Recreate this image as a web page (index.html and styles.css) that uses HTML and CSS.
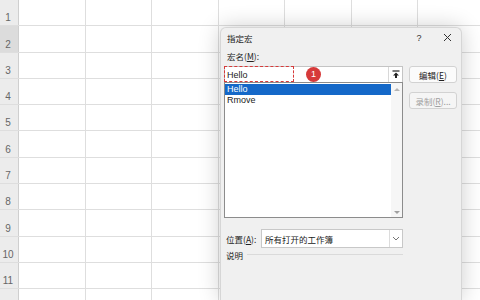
FILE: index.html
```html
<!DOCTYPE html>
<html lang="zh-CN">
<head>
    <meta charset="UTF-8">
    <title>指定宏</title>
    <link rel="stylesheet" href="styles.css">
</head>
<body>
    <div class="sheet">
        <div class="row"><div class="rowhead">1</div><div class="cell"></div><div class="cell"></div><div class="cell"></div><div class="cell"></div><div class="cell"></div><div class="cell"></div><div class="cell"></div></div>
        <div class="row"><div class="rowhead active">2</div><div class="cell"></div><div class="cell"></div><div class="cell"></div><div class="cell"></div><div class="cell"></div><div class="cell"></div><div class="cell"></div></div>
        <div class="row"><div class="rowhead">3</div><div class="cell"></div><div class="cell"></div><div class="cell"></div><div class="cell"></div><div class="cell"></div><div class="cell"></div><div class="cell"></div></div>
        <div class="row"><div class="rowhead">4</div><div class="cell"></div><div class="cell"></div><div class="cell"></div><div class="cell"></div><div class="cell"></div><div class="cell"></div><div class="cell"></div></div>
        <div class="row"><div class="rowhead">5</div><div class="cell"></div><div class="cell"></div><div class="cell"></div><div class="cell"></div><div class="cell"></div><div class="cell"></div><div class="cell"></div></div>
        <div class="row"><div class="rowhead">6</div><div class="cell"></div><div class="cell"></div><div class="cell"></div><div class="cell"></div><div class="cell"></div><div class="cell"></div><div class="cell"></div></div>
        <div class="row"><div class="rowhead">7</div><div class="cell"></div><div class="cell"></div><div class="cell"></div><div class="cell"></div><div class="cell"></div><div class="cell"></div><div class="cell"></div></div>
        <div class="row"><div class="rowhead">8</div><div class="cell"></div><div class="cell"></div><div class="cell"></div><div class="cell"></div><div class="cell"></div><div class="cell"></div><div class="cell"></div></div>
        <div class="row"><div class="rowhead">9</div><div class="cell"></div><div class="cell"></div><div class="cell"></div><div class="cell"></div><div class="cell"></div><div class="cell"></div><div class="cell"></div></div>
        <div class="row"><div class="rowhead">10</div><div class="cell"></div><div class="cell"></div><div class="cell"></div><div class="cell"></div><div class="cell"></div><div class="cell"></div><div class="cell"></div></div>
        <div class="row"><div class="rowhead">11</div><div class="cell"></div><div class="cell"></div><div class="cell"></div><div class="cell"></div><div class="cell"></div><div class="cell"></div><div class="cell"></div></div>
        <div class="row"><div class="rowhead"></div><div class="cell"></div><div class="cell"></div><div class="cell"></div><div class="cell"></div><div class="cell"></div><div class="cell"></div><div class="cell"></div></div>
    </div>

    <!-- 指定宏 dialog -->
    <div class="dialog">
        <div class="titlebar">
            <span class="title">指定宏</span>
            <span class="help">?</span>
            <span class="close">
                <svg width="9" height="9" viewBox="0 0 9 9"><path d="M1 1L8 8M8 1L1 8" stroke="#333" stroke-width="1" fill="none"/></svg>
            </span>
        </div>
        <div class="main">
            <div class="left">
                <div class="label">宏名(<u>M</u>):</div>
                <div class="namebox">
                    <span class="name-text">Hello</span>
                    <span class="mark-box"></span>
                    <span class="badge">1</span>
                    <span class="up-btn">
                        <svg width="8" height="9" viewBox="0 0 8 9"><path d="M0.5 1H7.5" stroke="#222" stroke-width="1.2"/><path d="M4 2.5L7 5.5H5V8H3V5.5H1Z" fill="#222"/></svg>
                    </span>
                </div>
                <div class="listbox">
                    <div class="items">
                        <div class="item selected">Hello</div>
                        <div class="item">Rmove</div>
                    </div>
                    <div class="scrollbar">
                        <span class="arrow-up"></span>
                        <span class="arrow-down"></span>
                    </div>
                </div>
                <div class="location">
                    <span class="loc-label">位置(<u>A</u>):</span>
                    <div class="select">
                        <span class="select-text">所有打开的工作簿</span>
                        <span class="select-btn">
                            <svg width="8" height="5" viewBox="0 0 8 5"><path d="M1 1L4 4L7 1" stroke="#777" stroke-width="1" fill="none"/></svg>
                        </span>
                    </div>
                </div>
                <div class="desc">
                    <span>说明</span>
                    <span class="desc-rule"></span>
                </div>
            </div>
            <div class="buttons">
                <button class="btn">编辑(<u>E</u>)</button>
                <button class="btn" disabled>录制(<u>R</u>)...</button>
            </div>
        </div>
    </div>
</body>
</html>
```

FILE: styles.css
```css
:root {
    --grid: #dedede;
    --head: #ececec;
    --dialog: #f0f0f0;
    --text: #222;
    --accent: #1468c8;
    --mark: #d63a3a;
}

body {
    margin: 0;
    width: 480px;
    height: 300px;
    overflow: hidden;
    position: relative;
    background: #fff;
    font-family: "Liberation Sans", "Noto Sans CJK SC", sans-serif;
    color: var(--text);
}

/* spreadsheet */
.sheet {
    display: flex;
    flex-direction: column;
    width: 480px;
    height: 300px;
    overflow: hidden;
}

.row {
    display: flex;
    flex: none;
    height: 26.3px;
    box-sizing: border-box;
    border-bottom: 1px solid var(--grid);
}

.rowhead {
    width: 19px;
    flex: none;
    box-sizing: border-box;
    background: var(--head);
    border-right: 1px solid #cfcfcf;
    color: #666;
    font-size: 10px;
    display: flex;
    align-items: flex-end;
    justify-content: center;
    padding-bottom: 2px;
    padding-right: 2px;
}

.rowhead.active {
    background: #dcdcdc;
}

.cell {
    width: 66.5px;
    flex: none;
    box-sizing: border-box;
    border-right: 1px solid var(--grid);
}

/* dialog */
.dialog {
    position: absolute;
    left: 220px;
    top: 27px;
    width: 242px;
    height: 273px;
    box-sizing: border-box;
    background: var(--dialog);
    border: 1px solid #d6d6d6;
    border-bottom: none;
    border-radius: 6px 6px 0 0;
    box-shadow: 0 0 22px rgba(0, 0, 0, 0.2);
    font-family: "Noto Sans CJK SC", "Liberation Sans", sans-serif;
    font-size: 8.5px;
}

.titlebar {
    height: 19px;
    display: flex;
    align-items: center;
    padding-left: 6px;
}

.title {
    flex: 1;
}

.help {
    width: 10px;
    margin-right: 19px;
    font-family: "Liberation Sans", sans-serif;
    font-size: 9px;
    text-align: center;
    color: #333;
}

.close {
    width: 9px;
    height: 9px;
    margin-right: 9px;
    display: flex;
}

.main {
    display: flex;
    gap: 6px;
    padding-left: 3px;
}

.left {
    width: 179px;
    display: flex;
    flex-direction: column;
}

.label {
    height: 19px;
    line-height: 19px;
    padding-left: 3px;
}

.namebox {
    position: relative;
    height: 16px;
    box-sizing: border-box;
    background: #fff;
    border: 1px solid #c4c4c4;
    border-bottom: none;
    display: flex;
    align-items: center;
    font-family: "Liberation Sans", sans-serif;
    font-size: 9px;
}

.name-text {
    flex: 1;
    padding-left: 2px;
}

.mark-box {
    position: absolute;
    left: -1px;
    top: -1px;
    width: 70px;
    height: 16px;
    box-sizing: border-box;
    border: 1.3px dashed var(--mark);
}

.badge {
    position: absolute;
    left: 81px;
    top: -0.5px;
    width: 15px;
    height: 15px;
    border-radius: 50%;
    background: var(--mark);
    color: #fff;
    font-size: 9px;
    line-height: 15px;
    text-align: center;
}

.up-btn {
    width: 13px;
    height: 100%;
    border-left: 1px solid #d8d8d8;
    display: flex;
    align-items: center;
    justify-content: center;
}

.listbox {
    height: 136px;
    box-sizing: border-box;
    background: #fff;
    border: 1px solid #8c8c8c;
    display: flex;
    font-family: "Liberation Sans", sans-serif;
    font-size: 9px;
}

.items {
    flex: 1;
    padding-top: 1px;
}

.item {
    height: 11px;
    line-height: 11px;
    padding-left: 2px;
}

.item.selected {
    background: var(--accent);
    color: #fff;
}

.scrollbar {
    width: 11px;
    background: #f6f6f6;
    display: flex;
    flex-direction: column;
    justify-content: space-between;
    align-items: center;
    padding: 5px 0 3px;
}

.arrow-up {
    border: 3px solid transparent;
    border-top: none;
    border-bottom: 3px solid #b5b5b5;
}

.arrow-down {
    border: 3px solid transparent;
    border-bottom: none;
    border-top: 3px solid #a0a0a0;
}

.location {
    margin-top: 11px;
    height: 19px;
    display: flex;
    align-items: center;
}

.loc-label {
    width: 35px;
    padding-left: 2px;
}

.select {
    flex: 1;
    height: 19px;
    box-sizing: border-box;
    background: #fff;
    border: 1px solid #c8c8c8;
    display: flex;
    align-items: center;
}

.select-text {
    flex: 1;
    padding-left: 3px;
}

.select-btn {
    width: 12px;
    height: 100%;
    border-left: 1px solid #dcdcdc;
    display: flex;
    align-items: center;
    justify-content: center;
}

.desc {
    height: 14px;
    display: flex;
    align-items: center;
    gap: 4px;
    padding-left: 2px;
}

.desc-rule {
    flex: 1;
    height: 1px;
    background: #dadada;
    margin-top: -2px;
}

.buttons {
    display: flex;
    flex-direction: column;
    gap: 9px;
    padding-top: 19px;
}

.btn {
    width: 48px;
    height: 17px;
    padding: 0;
    background: #fbfbfb;
    border: 1px solid #d2d2d2;
    border-radius: 3px;
    font-family: "Noto Sans CJK SC", "Liberation Sans", sans-serif;
    font-size: 8.5px;
    color: var(--text);
}

.btn:disabled {
    color: #a0a0a0;
    background: #f5f5f5;
}
```
